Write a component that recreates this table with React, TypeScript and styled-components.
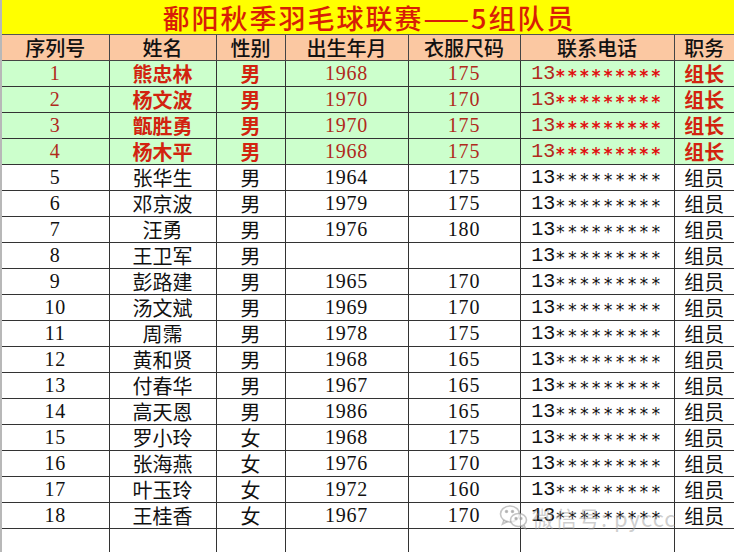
import React from "react";
import styled, { createGlobalStyle } from "styled-components";

const Global = createGlobalStyle`
  html, body { margin: 0; padding: 0; background: #ffffff; overflow: hidden; }
  body { font-family: "Liberation Serif", "Noto Sans CJK SC", serif; }
`;

const Sheet = styled.div`
  position: relative;
  width: 734px;
  height: 552px;
  overflow: hidden;
  border-left: 2px solid #b8b8b8;
  box-sizing: border-box;
`;

const Table = styled.table`
  width: 732px;
  border-collapse: collapse;
  table-layout: fixed;
`;

const TitleCell = styled.td`
  height: 34px;
  padding: 0 0 0 2px;
  background: #ffff00;
  color: #d81e06;
  text-align: center;
  vertical-align: middle;
  font-family: "Noto Sans CJK SC", sans-serif;
  font-size: 27px;
  font-weight: 500;
  line-height: 1;
  letter-spacing: 2px;
  border-bottom: 1px solid #555;
`;

const HeadCell = styled.th`
  height: 25px;
  padding: 0;
  background: #fbc8a2;
  color: #111;
  font-family: "Noto Sans CJK SC", sans-serif;
  font-size: 20px;
  font-weight: 500;
  line-height: 25px;
  text-align: center;
  border: 1px solid #444;
  &:first-child { border-left: none; }
  &:last-child { border-right: none; }
`;

const Row = styled.tr<{ $lead?: boolean }>`
  background: ${(p) => (p.$lead ? "#ccffcc" : "#ffffff")};
`;

const Cell = styled.td<{ $lead?: boolean; $kind: "num" | "cjk" | "phone" }>`
  height: 25px;
  padding: 0;
  text-align: center;
  border: 1px solid #333;
  &:first-child { border-left: none; }
  &:last-child { border-right: none; }
  line-height: 25px;
  white-space: nowrap;
  overflow: hidden;
  font-size: 20px;
  font-family: ${(p) =>
    p.$kind === "cjk"
      ? `"Noto Sans CJK SC", sans-serif`
      : p.$kind === "phone"
      ? `"Liberation Mono", monospace`
      : `"Liberation Serif", serif`};
  font-weight: ${(p) => (p.$lead && p.$kind === "cjk" ? 700 : 400)};
  letter-spacing: ${(p) => (p.$kind === "num" ? "0.8px" : "0")};
  color: ${(p) =>
    !p.$lead ? "#111" : p.$kind === "cjk" ? "#d2230f" : "#b02a1c"};
`;

const Stars = styled.span<{ $lead?: boolean }>`
  color: ${(p) => (p.$lead ? "#e01010" : "#111")};
  font-family: "DejaVu Sans Mono", monospace;
  font-size: 17px;
  font-weight: ${(p) => (p.$lead ? 700 : 400)};
  position: relative;
  top: 3px;
  letter-spacing: 1.7px;
`;

const Watermark = styled.div`
  position: absolute;
  left: 497px;
  top: 504px;
  display: flex;
  align-items: center;
  gap: 3px;
  color: rgba(160, 160, 160, 0.5);
  font-family: "Noto Sans CJK SC", sans-serif;
  font-size: 22px;
  pointer-events: none;
`;

const WmText = styled.span`
  letter-spacing: 1px;
  line-height: 26px;
`;

type P = {
  id: number;
  name: string;
  sex: string;
  year: string;
  size: string;
  role: string;
};

const people: P[] = [
  { id: 1, name: "熊忠林", sex: "男", year: "1968", size: "175", role: "组长" },
  { id: 2, name: "杨文波", sex: "男", year: "1970", size: "170", role: "组长" },
  { id: 3, name: "甑胜勇", sex: "男", year: "1970", size: "175", role: "组长" },
  { id: 4, name: "杨木平", sex: "男", year: "1968", size: "175", role: "组长" },
  { id: 5, name: "张华生", sex: "男", year: "1964", size: "175", role: "组员" },
  { id: 6, name: "邓京波", sex: "男", year: "1979", size: "175", role: "组员" },
  { id: 7, name: "汪勇", sex: "男", year: "1976", size: "180", role: "组员" },
  { id: 8, name: "王卫军", sex: "男", year: "", size: "", role: "组员" },
  { id: 9, name: "彭路建", sex: "男", year: "1965", size: "170", role: "组员" },
  { id: 10, name: "汤文斌", sex: "男", year: "1969", size: "170", role: "组员" },
  { id: 11, name: "周霈", sex: "男", year: "1978", size: "175", role: "组员" },
  { id: 12, name: "黄和贤", sex: "男", year: "1968", size: "165", role: "组员" },
  { id: 13, name: "付春华", sex: "男", year: "1967", size: "165", role: "组员" },
  { id: 14, name: "高天恩", sex: "男", year: "1986", size: "165", role: "组员" },
  { id: 15, name: "罗小玲", sex: "女", year: "1968", size: "175", role: "组员" },
  { id: 16, name: "张海燕", sex: "女", year: "1976", size: "170", role: "组员" },
  { id: 17, name: "叶玉玲", sex: "女", year: "1972", size: "160", role: "组员" },
  { id: 18, name: "王桂香", sex: "女", year: "1967", size: "170", role: "组员" },
];

const cols = [107, 107, 69, 123, 112, 154, 60];
const heads = ["序列号", "姓名", "性别", "出生年月", "衣服尺码", "联系电话", "职务"];

const WeChatIcon = () => (
  <svg width="30" height="26" viewBox="0 0 30 26" fill="none" stroke="rgba(150,150,150,0.55)" strokeWidth="1.6">
    <ellipse cx="11" cy="10" rx="9.5" ry="8" />
    <path d="M5 16 L3.5 20 L8.5 17.5" />
    <ellipse cx="19.5" cy="16" rx="8" ry="6.5" fill="rgba(255,255,255,0.6)" />
    <path d="M25 21 L26.5 24.5 L22 22.3" />
    <circle cx="7.5" cy="7.5" r="1" fill="rgba(150,150,150,0.55)" />
    <circle cx="13.5" cy="7.5" r="1" fill="rgba(150,150,150,0.55)" />
    <circle cx="17" cy="14.5" r="0.9" fill="rgba(150,150,150,0.55)" />
    <circle cx="22" cy="14.5" r="0.9" fill="rgba(150,150,150,0.55)" />
  </svg>
);

export default function App() {
  return (
    <>
      <Global />
      <Sheet>
        <Table>
          <colgroup>
            {cols.map((w, i) => (
              <col key={i} style={{ width: w }} />
            ))}
          </colgroup>
          <tbody>
            <tr>
              <TitleCell colSpan={7}>鄱阳秋季羽毛球联赛——5组队员</TitleCell>
            </tr>
            <tr>
              {heads.map((h) => (
                <HeadCell key={h}>{h}</HeadCell>
              ))}
            </tr>
            {people.map((p) => {
              const lead = p.id <= 4;
              return (
                <Row key={p.id} $lead={lead}>
                  <Cell $lead={lead} $kind="num">{p.id}</Cell>
                  <Cell $lead={lead} $kind="cjk">{p.name}</Cell>
                  <Cell $lead={lead} $kind="cjk">{p.sex}</Cell>
                  <Cell $lead={lead} $kind="num">{p.year}</Cell>
                  <Cell $lead={lead} $kind="num">{p.size}</Cell>
                  <Cell $lead={lead} $kind="phone">
                    13<Stars $lead={lead}>*********</Stars>
                  </Cell>
                  <Cell $lead={lead} $kind="cjk">{p.role}</Cell>
                </Row>
              );
            })}
            <Row>
              {cols.map((_, i) => (
                <Cell key={i} $kind="num">{"\u00a0"}</Cell>
              ))}
            </Row>
          </tbody>
        </Table>
        <Watermark>
          <WeChatIcon />
          <WmText>微信号: pyccc</WmText>
        </Watermark>
      </Sheet>
    </>
  );
}
